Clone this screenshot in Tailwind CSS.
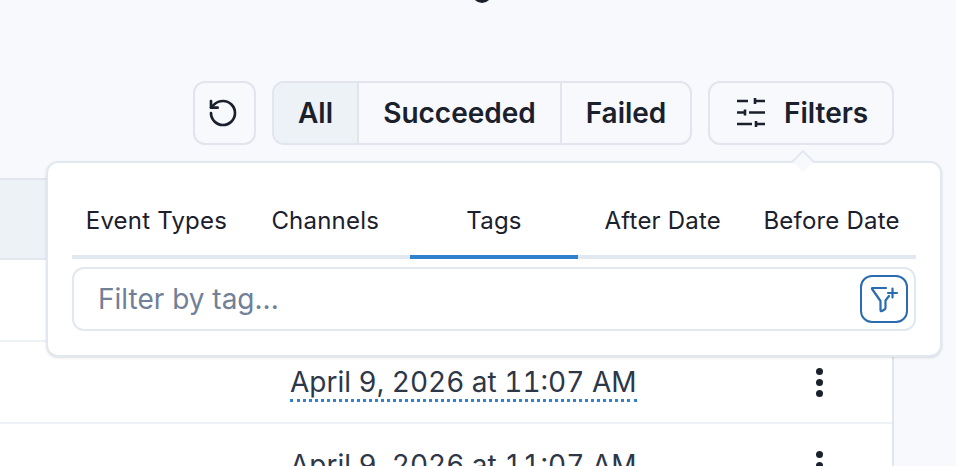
<!DOCTYPE html>
<html lang="en">
<head>
    <meta charset="UTF-8">
    <title>Messages</title>
    <script src="https://cdn.jsdelivr.net/npm/@tailwindcss/browser@4"></script>
</head>
<body class="bg-[#f8f9fd] font-['Inter',sans-serif] text-[#1a202c]">
    <div class="relative w-[956px] h-[466px] overflow-hidden">
        <!-- cut off spinner at the top edge -->
        <div class="absolute left-[472px] top-[-17px] w-5 h-5 rounded-full bg-[#1a202c]"></div>

        <!-- Toolbar -->
        <div class="flex justify-end gap-4 pt-[81px] pr-[62px]">
            <button class="w-[63px] h-[64px] flex items-center justify-center border-2 border-[#e2e4ee] rounded-xl">
                <svg class="w-8 h-8 -ml-[3px]" viewBox="0 0 24 24" fill="none" stroke="#1a202c" stroke-width="2" stroke-linecap="round" stroke-linejoin="round">
                    <path d="M3 12a9 9 0 1 0 9-9 9.750 9.750 0 0 0-6.740 2.740L3 8"/>
                    <path d="M3 3v5h5"/>
                </svg>
            </button>
            <div class="flex h-[64px] border-2 border-[#e2e4ee] rounded-xl overflow-hidden text-[28px] font-semibold">
                <div class="w-[85px] flex items-center justify-center bg-[#edf2f7] border-r-2 border-[#e2e4ee]">All</div>
                <div class="w-[203px] flex items-center justify-center border-r-2 border-[#e2e4ee]">Succeeded</div>
                <div class="w-[128px] flex items-center justify-center">Failed</div>
            </div>
            <button class="w-[186px] h-[64px] flex items-center justify-start pl-[27px] gap-[19px] border-2 border-[#e2e4ee] rounded-xl text-[28px] font-semibold">
                <svg class="w-[28px] h-[30px]" viewBox="0 0 28 30" fill="none" stroke="#1a202c" stroke-width="2.600">
                    <path d="M0 3h11M18 3h10M18 0v6"/>
                    <path d="M0 14.500h8M8 11.500v6M12 14.500h16"/>
                    <path d="M0 26h15M19 26h9M19 23v6"/>
                </svg>
                <span>Filters</span>
            </button>
        </div>

        <!-- Table -->
        <div class="mt-[33px] w-[894px] border-t-2 border-r-2 border-[#e2e4ee] bg-white">
            <div class="h-[78px] bg-[#edf2f7] border-b-2 border-[#e2e8f0] box-content"></div>
            <div class="h-[82px] border-b-2 border-[#edf2f7]"></div>
            <div class="h-[82px] flex items-center border-b-2 border-[#edf2f7]">
                <div class="ml-[290px] w-[491px] pt-[2px]">
                    <span class="text-[28px] leading-[34px] tabular-nums text-[#2d3748] border-b-[3px] border-dotted border-[#3182ce] inline-block">April 9, 2026 at 11:07 AM</span>
                </div>
                <div class="flex flex-col gap-1 ml-[35px]">
                    <span class="w-[7px] h-[7px] rounded-full bg-[#1a202c]"></span>
                    <span class="w-[7px] h-[7px] rounded-full bg-[#1a202c]"></span>
                    <span class="w-[7px] h-[7px] rounded-full bg-[#1a202c]"></span>
                </div>
            </div>
            <div class="h-[82px] flex items-center">
                <div class="ml-[290px] w-[491px] pt-[2px]">
                    <span class="text-[28px] leading-[34px] tabular-nums text-[#2d3748] border-b-[3px] border-dotted border-[#3182ce] inline-block">April 9, 2026 at 11:07 AM</span>
                </div>
                <div class="flex flex-col gap-1 ml-[35px]">
                    <span class="w-[7px] h-[7px] rounded-full bg-[#1a202c]"></span>
                    <span class="w-[7px] h-[7px] rounded-full bg-[#1a202c]"></span>
                    <span class="w-[7px] h-[7px] rounded-full bg-[#1a202c]"></span>
                </div>
            </div>
        </div>

        <!-- Filters popover -->
        <div class="absolute left-[46px] top-[161px] w-[896px] h-[196px] bg-white border-2 border-[#e2e8f0] rounded-xl shadow-sm px-6 pt-6">
            <div class="absolute left-[747px] top-[-10px] w-4 h-4 rotate-45 bg-[#f8f9fd] border-l-2 border-t-2 border-[#e2e8f0]"></div>
            <div class="grid grid-cols-5 h-[72px] border-b-4 border-[#e2e8f0] text-[24px] tracking-[0.2px]">
                <div class="flex items-center justify-center">Event Types</div>
                <div class="flex items-center justify-center">Channels</div>
                <div class="relative flex items-center justify-center">
                    Tags
                    <div class="absolute left-0 right-0 bottom-[-4px] h-1 bg-[#3182ce]"></div>
                </div>
                <div class="flex items-center justify-center">After Date</div>
                <div class="flex items-center justify-center">Before Date</div>
            </div>
            <div class="flex items-center justify-between h-[64px] mt-2 pl-6 pr-[6px] border-2 border-[#e2e8f0] rounded-xl">
                <span class="text-[28px] text-[#718096]">Filter by tag...</span>
                <button class="w-12 h-12 flex items-center justify-center border-2 border-[#2b6cb0] rounded-xl">
                    <svg class="w-[30px] h-[28px]" viewBox="0 0 30 28" fill="none" stroke="#2b6cb0" stroke-width="2.200" stroke-linecap="round" stroke-linejoin="round">
                        <path d="M17 3H3.500q-1 0-.4 1L11.500 16v9q0 1.500 1.500 1l2.500-1.500q1-.5 1-1.500V15.500L20 11"/>
                        <path d="M23.500 3.500v9M19 8h9"/>
                    </svg>
                </button>
            </div>
        </div>
    </div>
</body>
</html>
